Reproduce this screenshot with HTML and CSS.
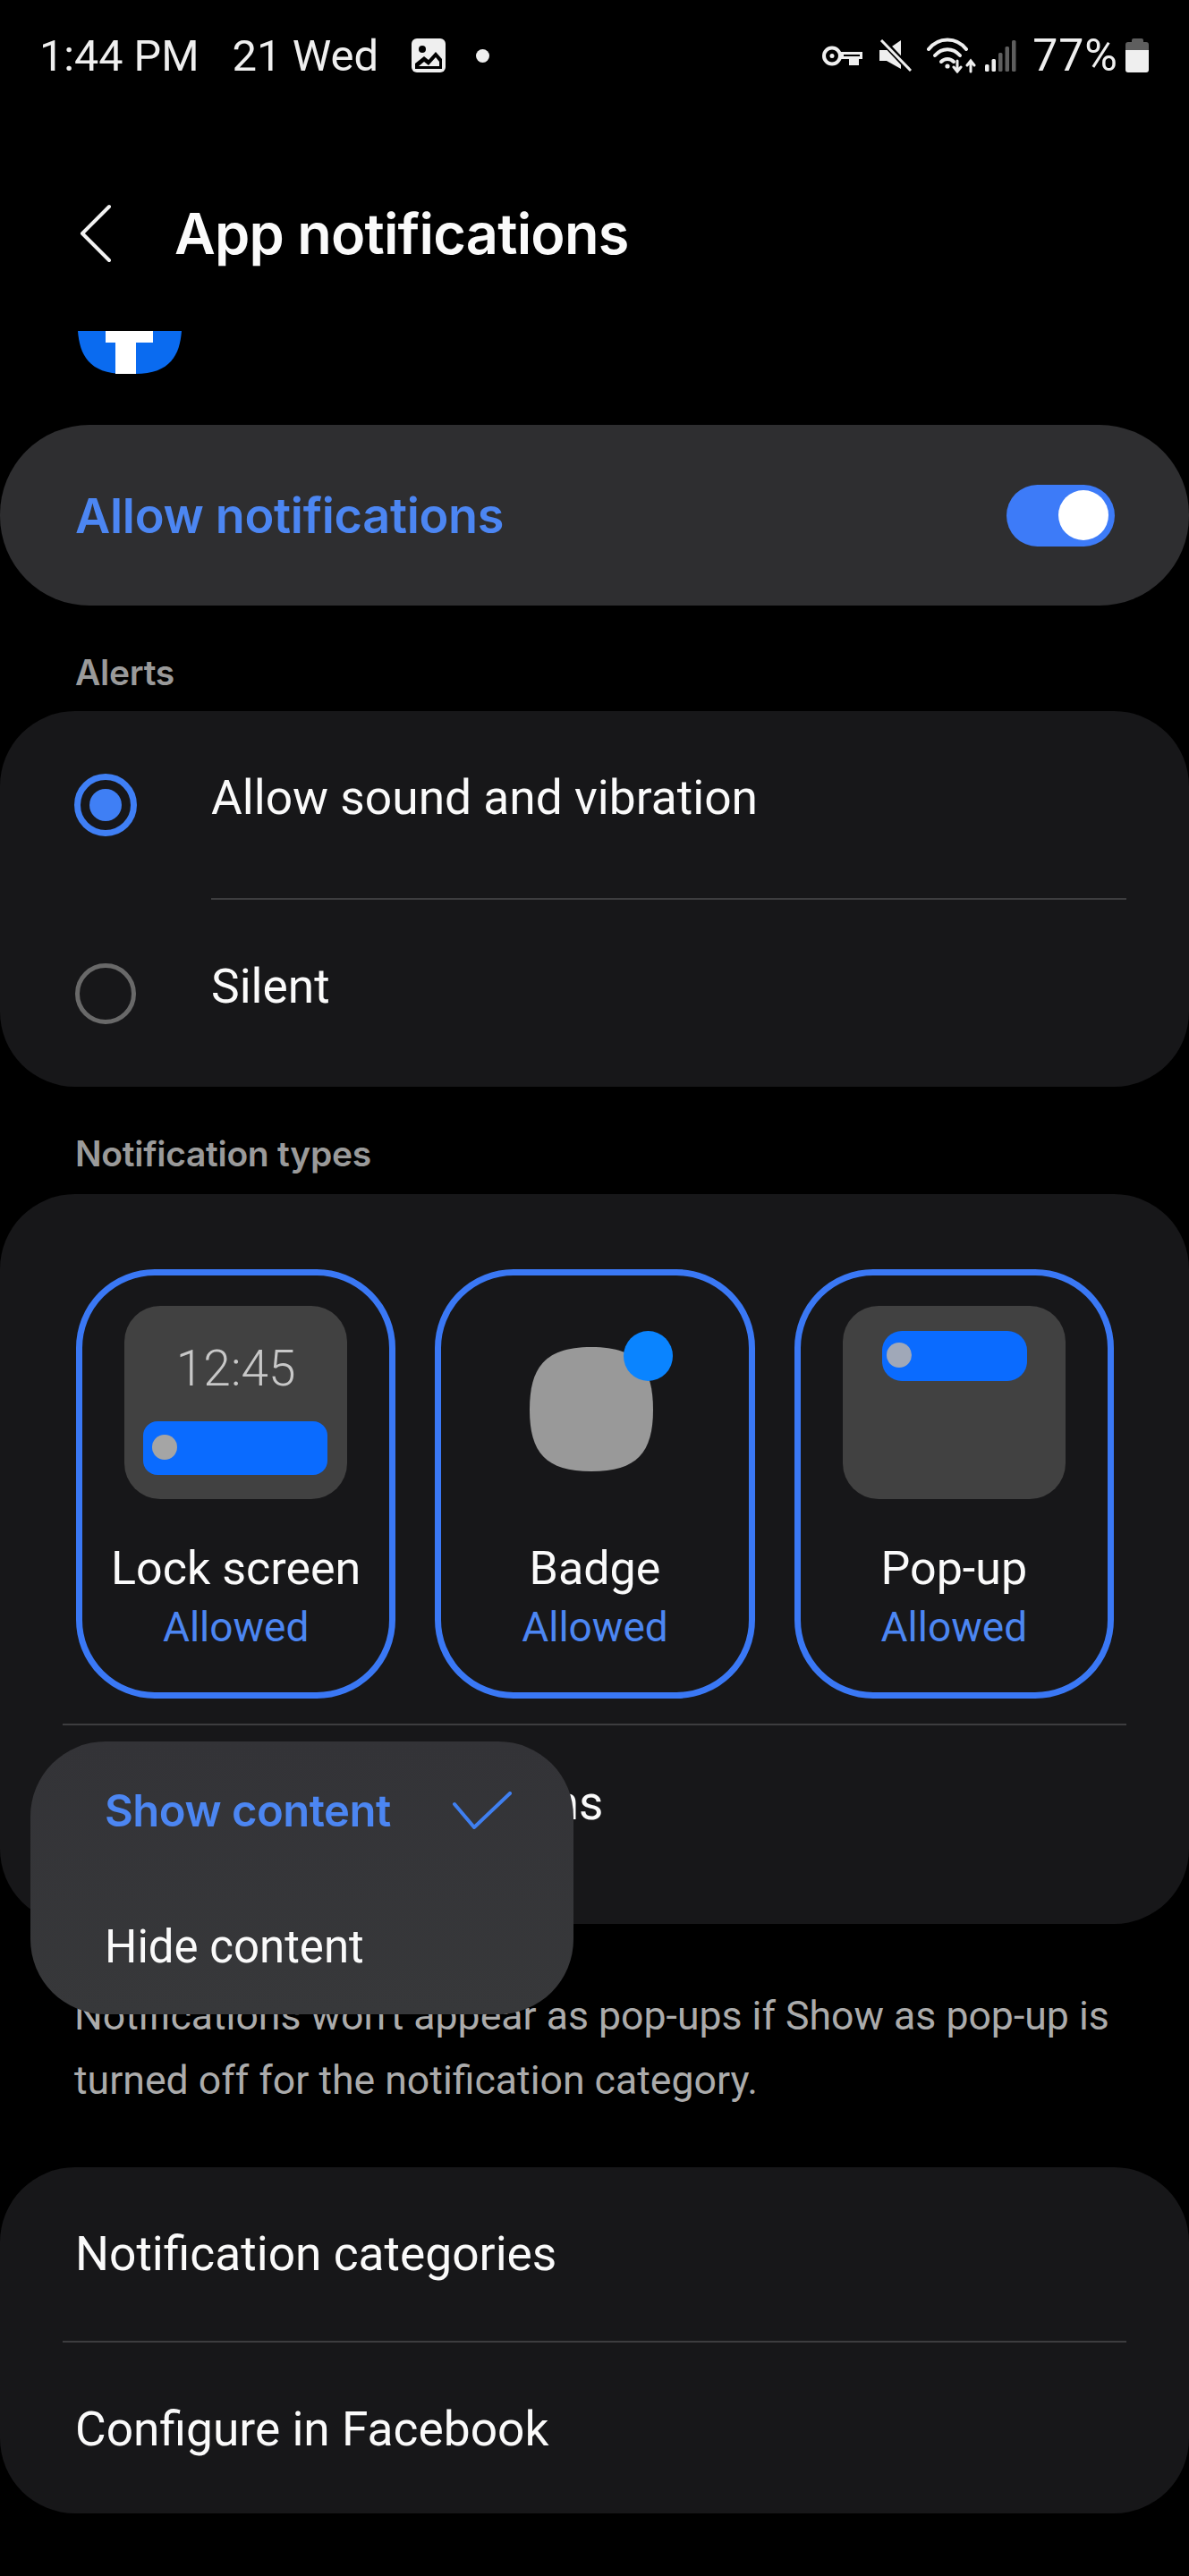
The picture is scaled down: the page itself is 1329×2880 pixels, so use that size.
FILE: index.html
```html
<!DOCTYPE html>
<html lang="en">
<head>
  <meta charset="UTF-8">
  <meta name="viewport" content="width=device-width, initial-scale=1.0">
  <title>App notifications</title>
  <link rel="stylesheet" href="styles.css">
</head>
<body>

  <div class="status-bar">
    <div class="status-left">
      <span class="status-time">1:44 PM</span>
      <span class="status-date">21 Wed</span>
      <svg class="icon-gallery" width="38" height="38" viewBox="0 0 38 38">
        <rect x="0" y="0" width="38" height="38" rx="6" fill="#efefef"/>
        <circle cx="12" cy="12" r="4" fill="#000"/>
        <path d="M4 34 V28 L14 20 L19 24 L27 15 L34 23 V34 Z" fill="#000"/>
        <path d="M8 31 L14 26 L19 30 L27 21 L31 26 V31 Z" fill="#efefef"/>
      </svg>
      <span class="status-dot"></span>
    </div>
    <div class="status-right">
      <svg class="icon-key" width="46" height="23" viewBox="0 0 46 23">
        <circle cx="11" cy="11.5" r="9" fill="none" stroke="#efefef" stroke-width="4"/>
        <circle cx="11" cy="11.5" r="2.5" fill="#efefef"/>
        <path d="M20 7 H45 V15 H41 V22 H30 V15 H20 Z" fill="#efefef"/>
        <path d="M24 10 H42 V12 H24 Z" fill="#000"/>
      </svg>
      <svg class="icon-mute" width="36" height="36" viewBox="0 0 36 36">
        <path d="M0 12 H8 L24 1 V33 L8 24 H0 Z" fill="#efefef"/>
        <path d="M2 0 L35 35" stroke="#000" stroke-width="7"/>
        <path d="M2 1 L35 35" stroke="#efefef" stroke-width="3"/>
      </svg>
      <svg class="icon-wifi" width="55" height="40" viewBox="0 0 55 40" fill="none" stroke="#efefef" stroke-width="4" stroke-linecap="round">
        <path d="M2 13 C13 -1 33 -1 44 13"/>
        <path d="M9 20 C17 11 29 11 37 20"/>
        <path d="M16 27 C20 23 26 23 30 27"/>
        <circle cx="23" cy="32" r="2.6" fill="#efefef" stroke="none"/>
        <path d="M34 26 V38 M30 33 L34 38 L38 33" stroke-width="3"/>
        <path d="M49 38 V26 M45 31 L49 26 L53 31" stroke-width="3"/>
      </svg>
      <svg class="icon-signal" width="35" height="37" viewBox="0 0 35 37">
        <rect x="0" y="28" width="4.5" height="8" rx="1.5" fill="#efefef"/>
        <rect x="7.5" y="22" width="4.5" height="14" rx="1.5" fill="#efefef"/>
        <rect x="15" y="15" width="4.5" height="21" rx="1.5" fill="#5e5e5e"/>
        <rect x="22.5" y="8" width="4.5" height="28" rx="1.5" fill="#5e5e5e"/>
        <rect x="30" y="1" width="4.5" height="35" rx="1.5" fill="#5e5e5e"/>
      </svg>
      <span class="status-battery">77%</span>
      <svg class="icon-battery" width="27" height="38" viewBox="0 0 27 38">
        <path d="M7 4 V2 Q7 0 9 0 H18 Q20 0 20 2 V4 H23 Q26 4 26 7 V13 H0 V7 Q0 4 3 4 Z" fill="#5e5e5e"/>
        <path d="M0 13 H26 V35 Q26 38 23 38 H3 Q0 38 0 35 Z" fill="#efefef"/>
      </svg>
    </div>
  </div>

  <div class="app-bar">
    <svg class="back-icon" width="40" height="66" viewBox="0 0 40 66" fill="none" stroke="#f2f2f2" stroke-width="4" stroke-linecap="round" stroke-linejoin="round">
      <path d="M34 3 L4 33 L34 63"/>
    </svg>
    <h1>App notifications</h1>
  </div>

  <svg class="app-icon" width="116" height="48" viewBox="0 0 116 48">
    <path d="M0 0 H116 C114 26 104 48 64 48 H52 C12 48 2 26 0 0 Z" fill="#0a6bf0"/>
    <path d="M31 0 H84 V13 H65 V48 H42 V13 H31 Z" fill="#fff"/>
  </svg>

  <div class="card card-allow">
    <span class="allow-label">Allow notifications</span>
    <div class="toggle"><div class="toggle-knob"></div></div>
  </div>

  <div class="section-label section-label-first">Alerts</div>
  <div class="card">
    <div class="radio-row">
      <span class="radio radio-on"></span>
      <span class="radio-text">Allow sound and vibration</span>
    </div>
    <div class="divider divider-inset"></div>
    <div class="radio-row">
      <span class="radio"></span>
      <span class="radio-text">Silent</span>
    </div>
  </div>

  <div class="section-label">Notification types</div>
  <div class="card card-types">
    <div class="tiles">
      <div class="tile">
        <div class="preview preview-lock">
          <span class="preview-clock">12:45</span>
          <div class="preview-bar"><span class="preview-dot"></span></div>
        </div>
        <div class="tile-name">Lock screen</div>
        <div class="tile-state">Allowed</div>
      </div>
      <div class="tile">
        <div class="preview-badge">
          <svg class="badge-shape" width="138" height="139" viewBox="0 0 138 139">
            <path d="M69 0 C120 0 138 22 138 70 C138 118 120 139 69 139 C18 139 0 118 0 70 C0 22 18 0 69 0 Z" fill="#999"/>
          </svg>
          <span class="badge-dot"></span>
        </div>
        <div class="tile-name">Badge</div>
        <div class="tile-state">Allowed</div>
      </div>
      <div class="tile">
        <div class="preview preview-popup">
          <div class="preview-bar popup-bar"><span class="preview-dot popup-dot"></span></div>
        </div>
        <div class="tile-name">Pop-up</div>
        <div class="tile-state">Allowed</div>
      </div>
    </div>
    <div class="divider"></div>
    <div class="types-row">Lock screen notifications</div>

    <div class="menu">
      <div class="menu-item menu-item-on">
        <span>Show content</span>
        <svg width="66" height="42" viewBox="0 0 66 42" fill="none" stroke="#3f7ff0" stroke-width="4" stroke-linecap="round" stroke-linejoin="round">
          <path d="M2 14 L24 40 L64 2"/>
        </svg>
      </div>
      <div class="menu-item">Hide content</div>
    </div>
  </div>

  <p class="footnote">Notifications won't appear as pop-ups if Show as pop-up is turned off for the notification category.</p>

  <div class="card card-bottom">
    <div class="link-row">Notification categories</div>
    <div class="divider"></div>
    <div class="link-row">Configure in Facebook</div>
  </div>

</body>
</html>
```

FILE: styles.css
```css
body {
  margin: 0;
  width: 1329px;
  height: 2880px;
  background-color: #000;
  color: #fafafa;
  font-family: 'Roboto', 'Noto Sans', sans-serif;
  overflow: hidden;
}

.status-bar {
  height: 120px;
  display: flex;
  justify-content: space-between;
  color: #efefef;
  font-size: 48.5px;
}
.status-left {
  display: flex;
  align-items: center;
  height: 124px;
  padding-left: 44px;
}
.status-date {
  margin-left: 37px;
  font-size: 49px;
}
.icon-gallery {
  margin-left: 37px;
}
.status-dot {
  width: 15px;
  height: 15px;
  margin-left: 34px;
  border-radius: 50%;
  background-color: #efefef;
}
.status-right {
  display: flex;
  align-items: center;
  height: 124px;
  padding-right: 44px;
}
.icon-mute {
  margin-left: 18px;
}
.icon-wifi {
  margin-left: 17px;
}
.icon-signal {
  margin-left: 10px;
}
.status-battery {
  margin-left: 18px;
  font-size: 50px;
  letter-spacing: 1px;
}
.icon-battery {
  margin-left: 8px;
}

.app-bar {
  height: 82px;
  padding: 100px 0 68px 88px;
  display: flex;
  align-items: center;
}
.app-bar h1 {
  margin: 0 0 0 67px;
  font-family: 'Inter', 'Roboto', sans-serif;
  font-size: 63px;
  font-weight: 600;
  letter-spacing: -0.8px;
}

.app-icon {
  display: block;
  margin-left: 87px;
}

.card {
  background-color: #171719;
  border-radius: 84px;
}
.card-allow {
  height: 202px;
  margin-top: 57px;
  padding: 0 83px 0 84px;
  display: flex;
  align-items: center;
  justify-content: space-between;
  border-radius: 100px;
  background-color: #2e2e30;
}
.allow-label {
  font-family: 'Inter', 'Roboto', sans-serif;
  font-size: 54px;
  font-weight: 600;
  letter-spacing: -0.3px;
  color: #4c86f2;
}
.toggle {
  width: 121px;
  height: 69px;
  border-radius: 35px;
  background-color: #3d7bf8;
  display: flex;
  align-items: center;
  justify-content: flex-end;
}
.toggle-knob {
  width: 56px;
  height: 56px;
  margin-right: 7px;
  border-radius: 50%;
  background-color: #fff;
}

.section-label {
  height: 40px;
  padding: 55px 0 25px 84px;
  line-height: 40px;
  font-family: 'Inter', 'Roboto', sans-serif;
  font-size: 39px;
  font-weight: 600;
  letter-spacing: -0.3px;
  color: #9a9a9a;
}
.section-label-first {
  padding-bottom: 23px;
}

.radio-row {
  height: 209px;
  padding-left: 84px;
  display: flex;
  align-items: center;
}
.radio {
  box-sizing: border-box;
  width: 68px;
  height: 68px;
  border: 5px solid #696969;
  border-radius: 50%;
}
.radio-on {
  width: 70px;
  height: 70px;
  margin-left: -1px;
  margin-right: -1px;
  border: 7px solid #3f7ff5;
  padding: 10px;
  background-color: #3f7ff5;
  background-clip: content-box;
}
.radio-text {
  margin: -15px 0 0 84px;
  font-size: 53.3px;
}

.divider {
  height: 2px;
  margin: 0 70px;
  background-color: #3d3d3f;
}
.divider-inset {
  margin-left: 236px;
}

.card-types {
  position: relative;
  height: 732px;
  padding-top: 84px;
}
.tiles {
  display: grid;
  grid-template-columns: repeat(3, 1fr);
  gap: 44px;
  padding: 0 84px 0 85px;
  margin-bottom: 28px;
}
.tile {
  box-sizing: border-box;
  height: 480px;
  padding-top: 34px;
  border: 7px solid #3a78f5;
  border-radius: 88px;
  text-align: center;
}
.preview {
  position: relative;
  width: 249px;
  height: 216px;
  margin: 0 auto;
  border-radius: 40px;
  background-color: #414141;
}
.preview-clock {
  display: block;
  padding-top: 41px;
  line-height: 58px;
  font-size: 55px;
  font-weight: 300;
  color: #c8c8c8;
}
.preview-bar {
  position: absolute;
  left: 21px;
  top: 129px;
  width: 206px;
  height: 60px;
  border-radius: 16px;
  background-color: #0a6bff;
}
.preview-dot {
  position: absolute;
  left: 10px;
  top: 15px;
  width: 28px;
  height: 28px;
  border-radius: 50%;
  background-color: #a5a5a5;
}
.popup-bar {
  left: 44px;
  top: 28px;
  width: 162px;
  height: 56px;
  border-radius: 22px;
}
.popup-dot {
  left: 5px;
  top: 13px;
  background-color: #a0a8b8;
}
.preview-badge {
  position: relative;
  height: 216px;
}
.badge-shape {
  position: absolute;
  left: 99px;
  top: 46px;
}
.badge-dot {
  position: absolute;
  left: 204px;
  top: 28px;
  width: 55px;
  height: 56px;
  border-radius: 50%;
  background-color: #0a84ff;
}
.tile-name {
  margin-top: 48px;
  line-height: 60px;
  font-size: 52px;
}
.tile-state {
  margin-top: 7px;
  line-height: 56px;
  font-size: 46px;
  color: #4c86f2;
}

.types-row {
  padding: 57px 0 0 84px;
  line-height: 60px;
  font-size: 53px;
}

.menu {
  position: absolute;
  left: 34px;
  top: 612px;
  box-sizing: border-box;
  width: 607px;
  height: 305px;
  padding: 1px 69px 0 83px;
  border-radius: 84px;
  background: linear-gradient(#333337, #37383a);
}
.menu-item {
  height: 152px;
  display: flex;
  align-items: center;
  justify-content: space-between;
  font-size: 51px;
}
.menu-item-on {
  font-family: 'Inter', 'Roboto', sans-serif;
  font-size: 49px;
  font-weight: 600;
  letter-spacing: -0.5px;
  color: #4c86f2;
}

.footnote {
  margin: 67px 0 61px;
  padding: 0 83px;
  line-height: 72px;
  font-size: 44.6px;
  color: #ababab;
}

.card-bottom {
  height: 387px;
}
.link-row {
  height: 194px;
  padding-left: 84px;
  display: flex;
  align-items: center;
  font-size: 53.3px;
}
```
